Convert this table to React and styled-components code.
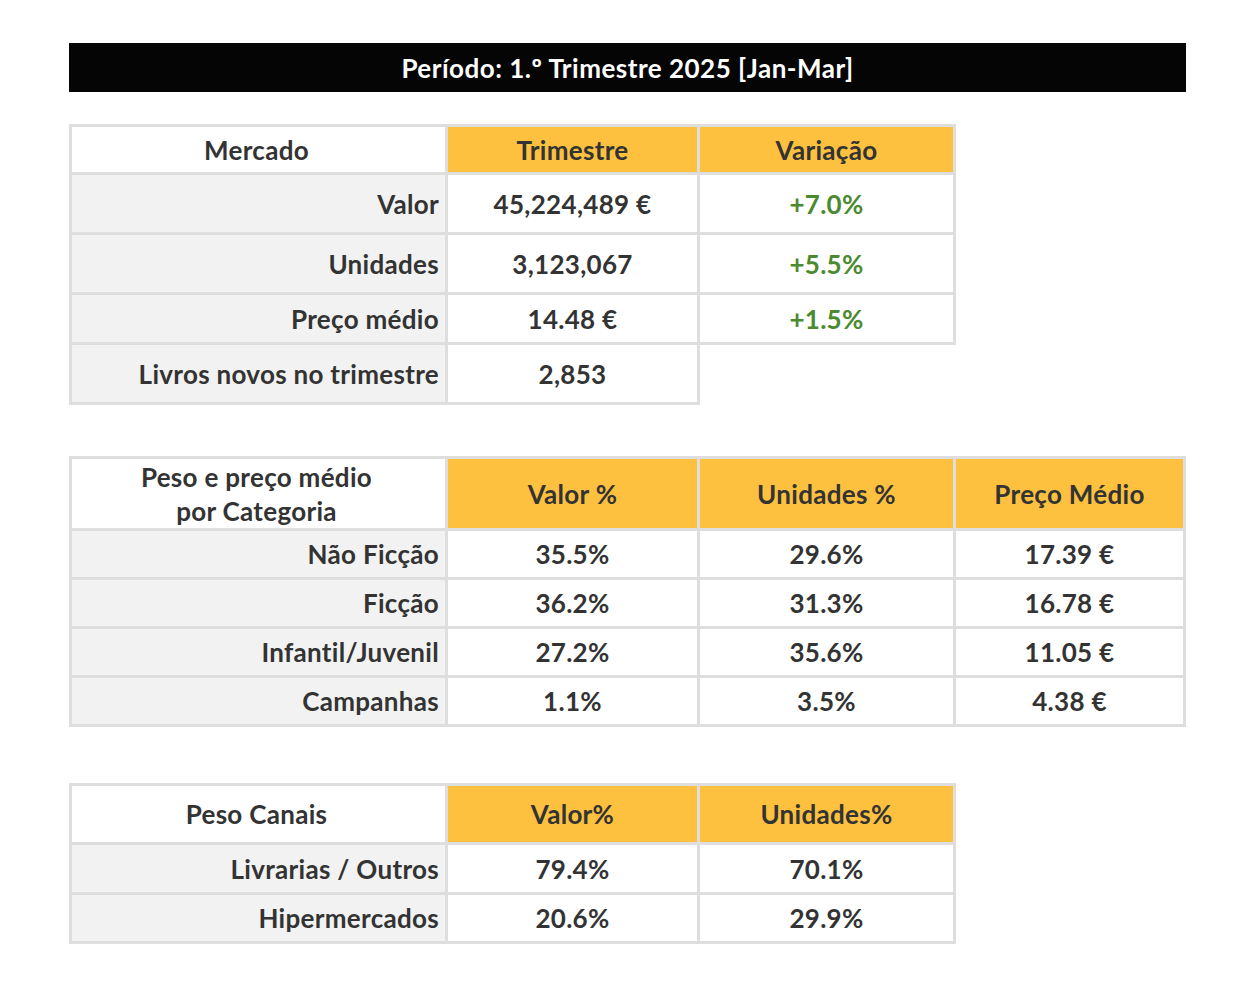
import styled, { createGlobalStyle } from 'styled-components';

const GlobalStyle = createGlobalStyle`
  body {
    margin: 0;
    background: #ffffff;
    font-family: Lato, "Open Sans", sans-serif;
  }
`;

const mercado = [
  { label: 'Valor', value: '45,224,489 €', change: '+7.0%' },
  { label: 'Unidades', value: '3,123,067', change: '+5.5%' },
  { label: 'Preço médio', value: '14.48 €', change: '+1.5%' },
  { label: 'Livros novos no trimestre', value: '2,853', change: null },
];

const categorias = [
  { label: 'Não Ficção', valor: '35.5%', unidades: '29.6%', preco: '17.39 €' },
  { label: 'Ficção', valor: '36.2%', unidades: '31.3%', preco: '16.78 €' },
  { label: 'Infantil/Juvenil', valor: '27.2%', unidades: '35.6%', preco: '11.05 €' },
  { label: 'Campanhas', valor: '1.1%', unidades: '3.5%', preco: '4.38 €' },
];

const canais = [
  { label: 'Livrarias / Outros', valor: '79.4%', unidades: '70.1%' },
  { label: 'Hipermercados', valor: '20.6%', unidades: '29.9%' },
];

export default function App() {
  return (
    <>
      <GlobalStyle />
      <Page>
        <PeriodBar>Período: 1.º Trimestre 2025 [Jan-Mar]</PeriodBar>

        <Grid $cols="376px 252px 256px" $rows="48px 60px 60px 50px 60px" $mt={32}>
          <TitleCell>Mercado</TitleCell>
          <HeadCell>Trimestre</HeadCell>
          <HeadCell>Variação</HeadCell>
          {mercado.map(row => (
            <Row key={row.label}>
              <LabelCell>{row.label}</LabelCell>
              <ValueCell>{row.value}</ValueCell>
              {row.change ? <ValueCell $green>{row.change}</ValueCell> : <EmptyCell />}
            </Row>
          ))}
        </Grid>

        <Grid $cols="376px 252px 256px 230px" $rows="72px 49px 49px 49px 49px" $mt={51}>
          <TitleCell $twoLines>Peso e preço médio<br />por Categoria</TitleCell>
          <HeadCell>Valor %</HeadCell>
          <HeadCell>Unidades %</HeadCell>
          <HeadCell>Preço Médio</HeadCell>
          {categorias.map(row => (
            <Row key={row.label}>
              <LabelCell>{row.label}</LabelCell>
              <ValueCell>{row.valor}</ValueCell>
              <ValueCell>{row.unidades}</ValueCell>
              <ValueCell>{row.preco}</ValueCell>
            </Row>
          ))}
        </Grid>

        <Grid $cols="376px 252px 256px" $rows="59px 50px 49px" $mt={56}>
          <TitleCell>Peso Canais</TitleCell>
          <HeadCell>Valor%</HeadCell>
          <HeadCell>Unidades%</HeadCell>
          {canais.map(row => (
            <Row key={row.label}>
              <LabelCell>{row.label}</LabelCell>
              <ValueCell>{row.valor}</ValueCell>
              <ValueCell>{row.unidades}</ValueCell>
            </Row>
          ))}
        </Grid>
      </Page>
    </>
  );
}

const Page = styled.div`
  width: 1117px;
  padding: 43px 0 40px 69px;
  color: #333333;
`;

const PeriodBar = styled.div`
  height: 49px;
  background: #050505;
  color: #ffffff;
  font-size: 26px;
  font-weight: 700;
  letter-spacing: 0.5px;
  display: flex;
  align-items: center;
  justify-content: center;
`;

const Grid = styled.div`
  display: grid;
  grid-template-columns: ${p => p.$cols};
  grid-template-rows: ${p => p.$rows};
  width: fit-content;
  margin-top: ${p => p.$mt}px;
  border-top: 3px solid #dedede;
  border-left: 3px solid #dedede;
  font-size: 26px;
  font-weight: 700;
  letter-spacing: 0.3px;
`;

const Row = styled.div`
  display: contents;
`;

const Cell = styled.div`
  display: flex;
  align-items: center;
  justify-content: center;
  text-align: center;
  border-right: 3px solid #dedede;
  border-bottom: 3px solid #dedede;
  background: #ffffff;
`;

const TitleCell = styled(Cell)`
  line-height: ${p => (p.$twoLines ? '34px' : 'normal')};
  padding-right: 4px;
`;

const HeadCell = styled(Cell)`
  background: #fdc13f;
`;

const LabelCell = styled(Cell)`
  justify-content: flex-end;
  background: #f2f2f2;
  padding-right: 6px;
`;

const ValueCell = styled(Cell)`
  color: ${p => (p.$green ? '#4b8a2f' : '#333333')};
`;

const EmptyCell = styled.div``;
